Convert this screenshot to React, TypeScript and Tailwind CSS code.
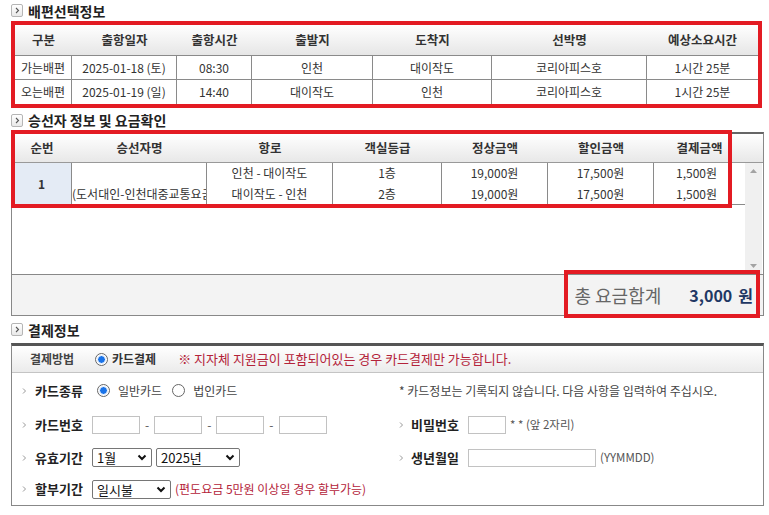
import React from "react";

const RED = "border-[#e31b23]";

function SectionTitle({ title }: { title: string }) {
  return (
    <div className="flex items-center h-full pl-[11px] gap-[5px]">
      <span className="flex items-center justify-center w-[12px] h-[13px] border border-[#b5b5b5] rounded-[2px] bg-gradient-to-b from-white to-[#e9e9e9]">
        <svg width="5" height="7" viewBox="0 0 5 7">
          <path d="M1 1 L3.5 3.5 L1 6" stroke="#555" strokeWidth="1.1" fill="none" />
        </svg>
      </span>
      <span className="text-[14px] font-bold text-[#222] leading-none">{title}</span>
    </div>
  );
}

function Chevron() {
  return (
    <svg width="5" height="8" viewBox="0 0 5 8" className="shrink-0">
      <path d="M1 1.5 L3.5 4 L1 6.5" stroke="#999" strokeWidth="1" fill="none" />
    </svg>
  );
}

function Radio({ checked, className = "" }: { checked?: boolean; className?: string }) {
  return (
    <span className={`flex items-center justify-center w-[13px] h-[13px] rounded-full border border-[#666] bg-white shrink-0 ${className}`}>
      {checked && <span className="w-[9px] h-[9px] rounded-full bg-[#1a73e8] border border-white" />}
    </span>
  );
}

function Select({ label, width, className = "" }: { label: string; width: string; className?: string }) {
  return (
    <div
      className={`flex items-center justify-between h-[19px] border border-[#767676] rounded-[2px] bg-white pl-[4px] pr-[4px] text-[13px] text-[#111] ${width} ${className}`}
    >
      <span className="leading-none">{label}</span>
      <svg width="10" height="7" viewBox="0 0 10 7">
        <path d="M1.5 1.5 L5 5 L8.5 1.5" stroke="#111" strokeWidth="2" fill="none" />
      </svg>
    </div>
  );
}

function Label({ text, width }: { text: string; width: string }) {
  return <span className={`${width} shrink-0 whitespace-nowrap text-[13px] font-bold text-[#222]`}>{text}</span>;
}

const scheduleCols = ["w-[57px]", "w-[105px]", "w-[75px]", "w-[121px]", "w-[119px]", "w-[155px]", "w-[111px]"];
const scheduleHead = ["구분", "출항일자", "출항시간", "출발지", "도착지", "선박명", "예상소요시간"];
const scheduleRows = [
  ["가는배편", "2025-01-18 (토)", "08:30", "인천", "대이작도", "코리아피스호", "1시간 25분"],
  ["오는배편", "2025-01-19 (일)", "14:40", "대이작도", "인천", "코리아피스호", "1시간 25분"],
];

const paxCols = ["w-[60px]", "w-[135px]", "w-[126px]", "w-[109px]", "w-[106px]", "w-[106px]", "w-[91px]"];
const paxHead = ["순번", "승선자명", "항로", "객실등급", "정상금액", "할인금액", "결제금액"];

export default function App() {
  return (
    <div className="w-[769px] h-[515px] bg-white overflow-hidden font-['Noto_Sans_CJK_KR','Noto_Sans',sans-serif] text-[#333]">
      {/* 배편선택정보 */}
      <div className="h-[21px]">
        <SectionTitle title="배편선택정보" />
      </div>
      <div className="ml-[11px] w-[751px] border-4 border-[#e31b23]">
        <div className="flex h-[31px] bg-gradient-to-b from-white to-[#e6e6e6] border-b border-[#8a8a8a]">
          {scheduleHead.map((h, i) => (
            <div key={h} className={`${scheduleCols[i]} flex items-center justify-center text-[12.5px] font-bold text-[#333]`}>
              {h}
            </div>
          ))}
        </div>
        {scheduleRows.map((row, r) => (
          <div key={r} className={`flex h-[24px] ${r === 0 ? "border-b border-[#8a8a8a]" : ""}`}>
            {row.map((c, i) => (
              <div
                key={i}
                className={`${scheduleCols[i]} flex items-center justify-center text-[12px] text-[#333] ${i < 6 ? "border-r border-[#8a8a8a]" : ""}`}
              >
                {c}
              </div>
            ))}
          </div>
        ))}
      </div>

      {/* 승선자 정보 및 요금확인 */}
      <div className="h-[24px]">
        <SectionTitle title="승선자 정보 및 요금확인" />
      </div>
      <div className="relative ml-[11px] w-[753px]">
        <div className="border border-[#888] border-t-2 border-t-[#666]">
          <div className="flex h-[29px] bg-gradient-to-b from-white to-[#e8e8e8] border-b border-[#999]">
            {paxHead.map((h, i) => (
              <div key={h} className={`${paxCols[i]} flex items-center justify-center text-[12.5px] font-bold text-[#333]`}>
                {h}
              </div>
            ))}
          </div>
          <div className="flex h-[111px]">
            <div className="w-[733px]">
              <div className="flex h-[42px] border-b border-[#8a8a8a] text-[12px]">
                <div className={`${paxCols[0]} flex items-center justify-center bg-[#e4ebf5] border-r border-[#8a8a8a] font-bold`}>1</div>
                <div className={`${paxCols[1]} flex flex-col border-r border-[#8a8a8a] overflow-hidden`}>
                  <div className="h-[21px]" />
                  <div className="h-[21px] flex items-center whitespace-nowrap">(도서대인-인천대중교통요금할인)</div>
                </div>
                <div className={`${paxCols[2]} flex flex-col border-r border-[#8a8a8a]`}>
                  <div className="h-[21px] flex items-center justify-center">인천 - 대이작도</div>
                  <div className="h-[21px] flex items-center justify-center">대이작도 - 인천</div>
                </div>
                <div className={`${paxCols[3]} flex flex-col border-r border-[#8a8a8a]`}>
                  <div className="h-[21px] flex items-center justify-center">1층</div>
                  <div className="h-[21px] flex items-center justify-center">2층</div>
                </div>
                <div className={`${paxCols[4]} flex flex-col border-r border-[#8a8a8a]`}>
                  <div className="h-[21px] flex items-center justify-center">19,000원</div>
                  <div className="h-[21px] flex items-center justify-center">19,000원</div>
                </div>
                <div className={`${paxCols[5]} flex flex-col border-r border-[#8a8a8a]`}>
                  <div className="h-[21px] flex items-center justify-center">17,500원</div>
                  <div className="h-[21px] flex items-center justify-center">17,500원</div>
                </div>
                <div className={`${paxCols[6]} flex flex-col pr-[6px]`}>
                  <div className="h-[21px] flex items-center justify-center">1,500원</div>
                  <div className="h-[21px] flex items-center justify-center">1,500원</div>
                </div>
              </div>
            </div>
            <div className="w-[17px] bg-[#f0f0f0] flex flex-col justify-between items-center py-[6px]">
              <svg width="7" height="4" viewBox="0 0 7 4">
                <path d="M0 4 L3.5 0 L7 4 Z" fill="#a3a3a3" />
              </svg>
              <svg width="7" height="4" viewBox="0 0 7 4">
                <path d="M0 0 L3.5 4 L7 0 Z" fill="#a3a3a3" />
              </svg>
            </div>
          </div>
          <div className="h-[41px] border-t border-[#888] bg-[#f3f3f3] flex items-center justify-end pr-[10px]">
            <span className="text-[18px] text-[#666] mr-[28px]">총 요금합계</span>
            <span className="text-[16px] font-bold text-[#1f3864]">3,000</span>
            <span className="text-[16px] font-bold text-[#1f3864] ml-[6px]">원</span>
          </div>
        </div>
        <div className={`absolute left-0 top-[-2px] w-[721px] h-[78px] border-4 ${RED}`} />
        <div className={`absolute left-[553px] top-[138px] w-[196px] h-[48px] border-4 ${RED}`} />
      </div>

      {/* 결제정보 */}
      <div className="h-[27px]">
        <SectionTitle title="결제정보" />
      </div>
      <div className="ml-[11px] w-[753px] border border-[#888] border-t-[3px] border-t-[#555]">
        <div className="flex items-center h-[27px] bg-gradient-to-b from-white to-[#ebebeb] border-b border-[#c4c4c4] pl-[18px] text-[12px]">
          <span className="font-bold text-[#444] w-[65px]">결제방법</span>
          <Radio checked />
          <span className="font-bold text-[#333] ml-[4px]">카드결제</span>
          <span className="text-[#b4233a] ml-[22px] text-[13px]">※ 지자체 지원금이 포함되어있는 경우 카드결제만 가능합니다.</span>
        </div>
        <div className="grid grid-cols-[377px_1fr] pl-[10px]">
          {/* row 1 */}
          <div className="flex items-center h-[35px] gap-[8px]">
            <Chevron />
            <Label text="카드종류" width="w-[49px]" />
            <Radio checked className="ml-[5px]" />
            <span className="text-[12px] text-[#444] mr-[2px]">일반카드</span>
            <Radio />
            <span className="text-[12px] text-[#444]">법인카드</span>
          </div>
          <div className="flex items-center h-[35px] text-[12px] text-[#444]">
            * 카드정보는 기록되지 않습니다. 다음 사항을 입력하여 주십시오.
          </div>
          {/* row 2 */}
          <div className="flex items-center h-[34px] gap-[8px]">
            <Chevron />
            <Label text="카드번호" width="w-[49px]" />
            <div className="flex items-center gap-[5px] text-[12px] text-[#555]">
              <span className="w-[48px] h-[18px] border border-[#c2c2c2]" />
              <span>-</span>
              <span className="w-[48px] h-[18px] border border-[#c2c2c2]" />
              <span>-</span>
              <span className="w-[48px] h-[18px] border border-[#c2c2c2]" />
              <span>-</span>
              <span className="w-[48px] h-[18px] border border-[#c2c2c2]" />
            </div>
          </div>
          <div className="flex items-center h-[34px] gap-[7px]">
            <Chevron />
            <Label text="비밀번호" width="w-[50px]" />
            <span className="w-[38px] h-[18px] border border-[#c2c2c2]" />
            <span className="text-[11.5px] text-[#555] -ml-[3px]">* * (앞 2자리)</span>
          </div>
          {/* row 3 */}
          <div className="flex items-center h-[31px] gap-[8px]">
            <Chevron />
            <Label text="유효기간" width="w-[49px]" />
            <Select label="1월" width="w-[60px]" />
            <Select label="2025년" width="w-[84px]" className="-ml-[4px]" />
          </div>
          <div className="flex items-center h-[31px] gap-[7px]">
            <Chevron />
            <Label text="생년월일" width="w-[50px]" />
            <span className="w-[128px] h-[18px] border border-[#c2c2c2]" />
            <span className="text-[11.5px] text-[#555] -ml-[3px]">(YYMMDD)</span>
          </div>
          {/* row 4 */}
          <div className="flex items-center h-[32px] gap-[8px]">
            <Chevron />
            <Label text="할부기간" width="w-[49px]" />
            <Select label="일시불" width="w-[79px]" />
            <span className="text-[12px] text-[#b4233a] -ml-[4px] whitespace-nowrap">(편도요금 5만원 이상일 경우 할부가능)</span>
          </div>
          <div className="h-[32px]" />
        </div>
      </div>
    </div>
  );
}
